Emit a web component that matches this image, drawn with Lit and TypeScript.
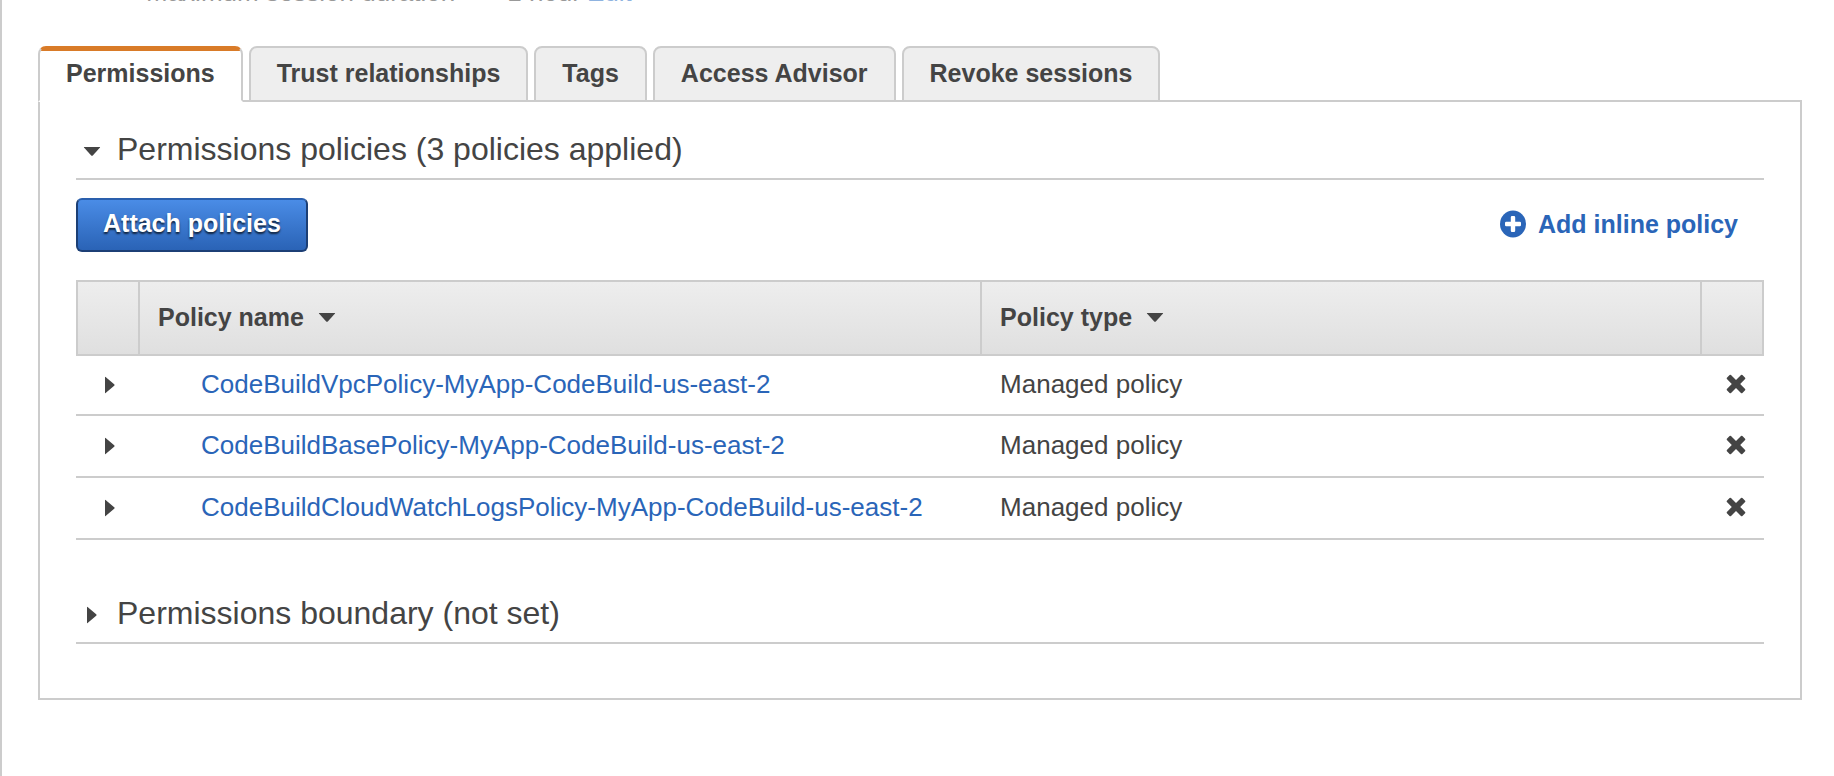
import { LitElement, html, css } from "lit";
import { customElement, state } from "lit/decorators.js";
import { classMap } from "lit/directives/class-map.js";

const TABS = ["Permissions", "Trust relationships", "Tags", "Access Advisor", "Revoke sessions"];

const POLICIES = [
  { name: "CodeBuildVpcPolicy-MyApp-CodeBuild-us-east-2", type: "Managed policy" },
  { name: "CodeBuildBasePolicy-MyApp-CodeBuild-us-east-2", type: "Managed policy" },
  { name: "CodeBuildCloudWatchLogsPolicy-MyApp-CodeBuild-us-east-2", type: "Managed policy" },
];

const caretDown = html`<svg class="caret" width="18" height="18" viewBox="0 0 18 18" aria-hidden="true">
  <path d="M1.2 5h15.6q.6 0 .2.5l-7.2 7.9q-.8.8-1.6 0L1 5.500q-.4-.5.2-.5z" />
</svg>`;

const caretRight = html`<svg class="caret" width="18" height="18" viewBox="0 0 18 18" aria-hidden="true">
  <path d="M4 1.300q0-.8.600-.2l8.600 7.200q.9.700 0 1.400l-8.600 7.200q-.6.600-.6-.2z" />
</svg>`;

const plusCircle = html`<svg class="plus" width="26" height="28" viewBox="0 0 26 28" aria-hidden="true">
  <ellipse cx="13" cy="14" rx="13" ry="13.500" />
  <path
    class="plus-sign"
    d="M12 6h2q1.200 0 1.200 1.200v4.600h4.600q1.200 0 1.200 1.200v2q0 1.200-1.200 1.200h-4.600v4.600q0 1.200-1.200 1.200h-2q-1.200 0-1.200-1.200v-4.600H6.200Q5 16.200 5 15v-2q0-1.200 1.200-1.200h4.600V7.200Q10.800 6 12 6z"
  />
</svg>`;

const cross = html`<svg width="20" height="20" viewBox="0 0 20 20" aria-hidden="true">
  <path
    d="M3.600 1q.7-.5 1.400 0l5 5 5-5q.7-.5 1.400 0l2.700 2.700q.5.700 0 1.400L14.200 10l4.900 4.900q.5.700 0 1.400L16.400 19q-.7.500-1.400 0l-5-5-5 5q-.7.500-1.400 0L.900 16.300q-.5-.7 0-1.400L5.800 10 .900 5.100q-.5-.7 0-1.400z"
  />
</svg>`;

@customElement("app-root")
export class AppRoot extends LitElement {
  @state() private active = 0;

  static styles = css`
    :host {
      display: block;
      box-sizing: border-box;
      min-height: 100vh;
      overflow: hidden;
      border-left: 2px solid #ccc;
      background: #fff;
      color: #444;
      font: 26px/32px "Liberation Sans", Arial, sans-serif;
    }
    *,
    *::before {
      box-sizing: border-box;
    }
    a {
      color: #2a65b8;
      text-decoration: none;
    }
    button {
      margin: 0;
      padding: 0;
      border: 0;
      background: none;
      color: inherit;
      font: inherit;
      cursor: pointer;
    }
    svg {
      display: block;
      flex: none;
      fill: currentColor;
    }
    .summary {
      display: flex;
      gap: 6px;
      margin: -24px 0 0 144px;
      color: #999;
    }
    .summary a {
      color: #8fb3e0;
    }
    .label {
      margin-right: 46px;
    }
    .content {
      padding: 38px 32px 32px 36px;
    }
    .tabs {
      display: flex;
      gap: 6px;
      margin-bottom: -2px;
    }
    .tab {
      height: 56px;
      padding: 0 26px 2px;
      border: 2px solid #ccc;
      border-radius: 8px 8px 0 0;
      background: #eee;
      font-size: 25px;
      font-weight: bold;
    }
    .tab.active {
      position: relative;
      border-bottom-color: #fff;
      background: linear-gradient(#d97b28 3px, #fff 3px);
      border-top-color: #d97b28;
    }
    .panel {
      padding: 28px 36px 54px;
      border: 2px solid #ccc;
    }
    .section-title {
      margin: 0;
      padding-bottom: 10px;
      border-bottom: 2px solid #ccc;
      font-size: 32px;
      font-weight: normal;
      line-height: 38px;
    }
    .toggle {
      display: flex;
      align-items: center;
      gap: 16px;
      padding-left: 7px;
    }
    .toggle .caret {
      margin-top: 4px;
    }
    .toolbar {
      display: flex;
      align-items: center;
      justify-content: space-between;
      padding: 18px 26px 28px 0;
    }
    .attach {
      height: 54px;
      padding: 0 25px 4px;
      border: 2px solid #1c3f75;
      border-top-color: #2a5fad;
      border-radius: 6px;
      background: linear-gradient(#4a8ce6, #2a63b6);
      color: #fff;
      font-size: 25px;
      font-weight: bold;
      text-shadow: 0 2px 2px rgba(0, 0, 0, 0.7);
    }
    .add {
      display: flex;
      align-items: center;
      gap: 12px;
      padding-bottom: 3px;
      font-size: 25px;
      font-weight: bold;
    }
    .plus-sign {
      fill: #fff;
    }
    table {
      width: 100%;
      table-layout: fixed;
      border-spacing: 0;
      margin-bottom: 54px;
    }
    .col-toggle {
      width: 62px;
    }
    .col-type {
      width: 42.65%;
    }
    .col-remove {
      width: 64px;
    }
    thead tr {
      background: linear-gradient(#eee, #dfdfdf);
    }
    th {
      height: 76px;
      padding: 0 0 2px 18px;
      border: 2px solid #ccc;
      border-right: 0;
      font-size: 25px;
      text-align: left;
    }
    th:last-child {
      border-right: 2px solid #ccc;
    }
    .sort {
      display: flex;
      align-items: center;
      gap: 14px;
      font-weight: bold;
    }
    td {
      height: 62px;
      padding: 0;
      border-bottom: 2px solid #ccc;
    }
    tbody tr:first-child td {
      height: 60px;
    }
    .expand {
      padding-left: 25px;
    }
    .name {
      padding: 0 0 3px 63px;
    }
    .type {
      padding: 0 0 3px 20px;
    }
    .remove {
      padding-left: 26px;
    }
  `;

  render() {
    return html`
      <div class="summary">
        <span class="label">Maximum session duration</span>
        <span>1 hour</span>
        <a href="#edit">Edit</a>
      </div>
      <main class="content">
        <div class="tabs" role="tablist">
          ${TABS.map(
            (label, i) => html`<button
              class=${classMap({ tab: true, active: i === this.active })}
              role="tab"
              aria-selected=${i === this.active ? "true" : "false"}
              @click=${() => (this.active = i)}
            >${label}</button>`,
          )}
        </div>
        <section class="panel" role="tabpanel">
          <h2 class="section-title">
            <button class="toggle" aria-expanded="true">
              ${caretDown}<span>Permissions policies (3 policies applied)</span>
            </button>
          </h2>
          <div class="toolbar">
            <button class="attach">Attach policies</button>
            <a class="add" href="#inline">${plusCircle}<span>Add inline policy</span></a>
          </div>
          <table>
            <colgroup>
              <col class="col-toggle" />
              <col />
              <col class="col-type" />
              <col class="col-remove" />
            </colgroup>
            <thead>
              <tr>
                <th></th>
                <th><button class="sort"><span>Policy name</span>${caretDown}</button></th>
                <th><button class="sort"><span>Policy type</span>${caretDown}</button></th>
                <th></th>
              </tr>
            </thead>
            <tbody>
              ${POLICIES.map(
                (p) => html`<tr>
                  <td class="expand"><button aria-label="Expand ${p.name}">${caretRight}</button></td>
                  <td class="name"><a href="#policy">${p.name}</a></td>
                  <td class="type">${p.type}</td>
                  <td class="remove"><button aria-label="Detach ${p.name}">${cross}</button></td>
                </tr>`,
              )}
            </tbody>
          </table>
          <h2 class="section-title">
            <button class="toggle" aria-expanded="false">
              ${caretRight}<span>Permissions boundary (not set)</span>
            </button>
          </h2>
        </section>
      </main>
    `;
  }
}
